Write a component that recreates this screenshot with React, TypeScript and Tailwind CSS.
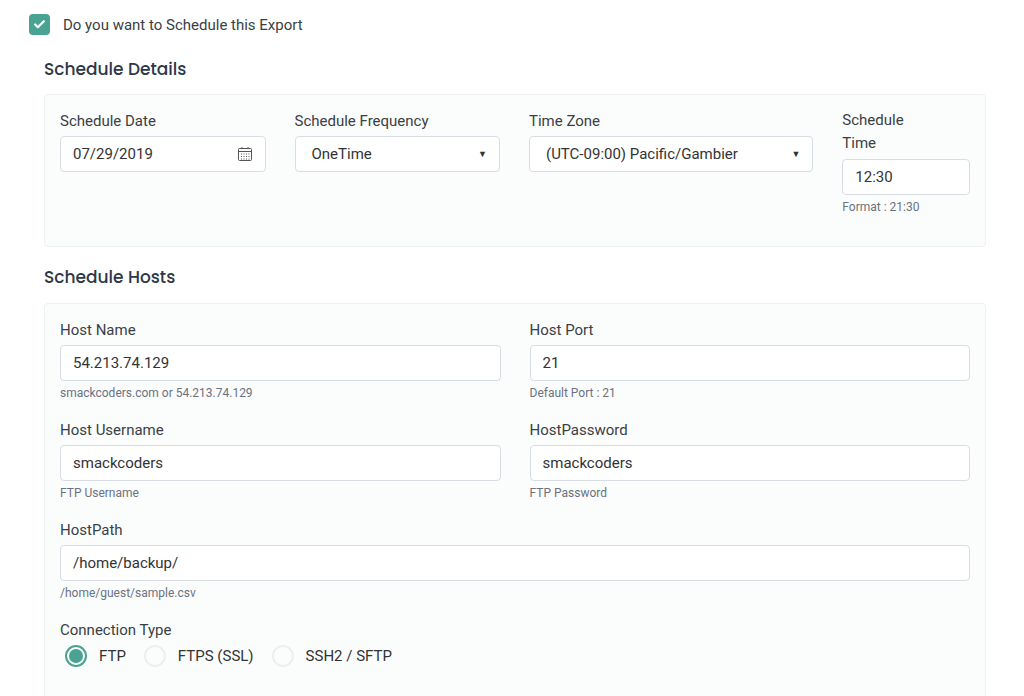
import { Check } from "lucide-react"

const heading = "font-[Poppins,Inter,sans-serif] text-[17px] leading-[22px] font-medium text-[#2d3748]"
const label = "text-[15px] text-[#3a3f45] leading-[18px] mb-[6px]"
const input = "h-[36px] rounded-[4px] border border-[#d8dde3] bg-white px-3 flex items-center text-[15px] leading-[18px] text-[#333]"
const help = "text-[12px] leading-[14px] text-[#6b7280] mt-[5px]"

function Field({ name, value, hint, className = "" }: { name: string; value: string; hint: string; className?: string }) {
    return (
        <div className={className}>
            <div className={label}>{name}</div>
            <div className={input}>{value}</div>
            <div className={help}>{hint}</div>
        </div>
    )
}

function Caret() {
    return <span className="ml-auto text-[9px] text-[#333]">▼</span>
}

function Radio({ on, text }: { on?: boolean; text: string }) {
    return (
        <div className="flex items-center gap-[12px]">
            <span className={`w-[22px] h-[22px] rounded-full border-2 flex items-center justify-center ${on ? "border-[#4aa392]" : "border-[#eceff2]"}`}>
                {on && <span className="w-[14px] h-[14px] rounded-full bg-[#4aa392]" />}
            </span>
            <span className="text-[15px] leading-[18px] text-[#333]">{text}</span>
        </div>
    )
}

export default function App() {
    return (
        <div className="w-[1024px] h-[696px] overflow-hidden bg-white font-[Roboto,sans-serif] leading-[18px]">
            <div className="flex items-center pl-[29px] pt-[14px]">
                <span className="w-[21px] h-[21px] rounded-[4px] bg-[#4aa392] flex items-center justify-center">
                    <Check className="w-[13px] h-[13px] text-white" strokeWidth={4} />
                </span>
                <span className="ml-[13px] text-[15px] text-[#3a3f45]">Do you want to Schedule this Export</span>
            </div>
            <div className="pl-[44px] pr-[38px]">
                <div className={`${heading} mt-[23px] mb-[14px]`}>Schedule Details</div>
                <div className="rounded-[4px] border border-[#eef1f3] bg-[#fbfcfc] h-[153px] px-[15px] pt-[17px] flex gap-[29px]">
                    <div className="w-[206px]">
                        <div className={label}>Schedule Date</div>
                        <div className={input}>
                            07/29/2019
                            <svg className="ml-auto" width="16" height="16" viewBox="0 0 16 16" fill="none" stroke="#555" strokeWidth="1">
                                <rect x="1.5" y="2.5" width="13" height="12" rx="1" />
                                <line x1="1.5" y1="5.5" x2="14.5" y2="5.5" />
                                <line x1="5" y1="1" x2="5" y2="3" />
                                <line x1="11" y1="1" x2="11" y2="3" />
                                {[4, 6.5, 9, 11.5].map(x => [8, 10.5, 13].map(y => <rect key={`${x}${y}`} x={x} y={y - 0.5} width="1" height="1" fill="#555" stroke="none" />))}
                            </svg>
                        </div>
                    </div>
                    <div className="w-[206px]">
                        <div className={label}>Schedule Frequency</div>
                        <div className={`${input} pl-4`}>OneTime<Caret /></div>
                    </div>
                    <div className="w-[285px]">
                        <div className={label}>Time Zone</div>
                        <div className={`${input} pl-4`}>(UTC-09:00) Pacific/Gambier<Caret /></div>
                    </div>
                    <div className="w-[128px]">
                        <div className="text-[15px] text-[#3a3f45] leading-[23px] -mt-[3px] mb-[4px]">Schedule<br />Time</div>
                        <div className={input}>12:30</div>
                        <div className={help}>Format : 21:30</div>
                    </div>
                </div>
                <div className={`${heading} mt-[19px] mb-[15px]`}>Schedule Hosts</div>
                <div className="rounded-[4px] border border-[#eef1f3] bg-[#fbfcfc] h-[420px] px-[15px] pt-[17px]">
                    <div className="grid grid-cols-2 gap-x-[29px] gap-y-[21px]">
                        <Field name="Host Name" value="54.213.74.129" hint="smackcoders.com or 54.213.74.129" />
                        <Field name="Host Port" value="21" hint="Default Port : 21" />
                        <Field name="Host Username" value="smackcoders" hint="FTP Username" />
                        <Field name="HostPassword" value="smackcoders" hint="FTP Password" />
                        <Field name="HostPath" value="/home/backup/" hint="/home/guest/sample.csv" className="col-span-2" />
                    </div>
                    <div className="mt-[21px]">
                        <div className="text-[15px] text-[#3a3f45] mb-[6px]">Connection Type</div>
                        <div className="flex gap-[18px] pl-[5px]">
                            <Radio on text="FTP" />
                            <Radio text="FTPS (SSL)" />
                            <Radio text="SSH2 / SFTP" />
                        </div>
                    </div>
                </div>
            </div>
        </div>
    )
}
